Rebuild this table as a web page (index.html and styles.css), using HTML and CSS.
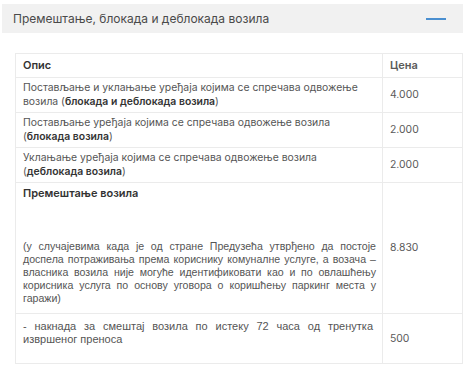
FILE: index.html
```html
<!DOCTYPE html>
<html lang="sr">
<head>
<meta charset="utf-8">
<title>Премештање, блокада и деблокада возила</title>
<link rel="stylesheet" href="styles.css">
</head>
<body>
<div class="wrap">
  <div class="acc-head">
    <span class="acc-title">Премештање, блокада и деблокада возила</span>
    <span class="acc-minus"></span>
  </div>
  <div class="acc-body">
    <table class="prices">
      <thead>
        <tr><th class="c-desc">Опис</th><th class="c-price">Цена</th></tr>
      </thead>
      <tbody>
        <tr>
          <td class="c-desc">Постављање и уклањање уређаја којима се спречава одвожење возила (<b>блокада и деблокада возила</b>)</td>
          <td class="c-price">4.000</td>
        </tr>
        <tr>
          <td class="c-desc">Постављање уређаја којима се спречава одвожење возила (<b>блокада возила</b>)</td>
          <td class="c-price">2.000</td>
        </tr>
        <tr>
          <td class="c-desc">Уклањање уређаја којима се спречава одвожење возила (<b>деблокада возила</b>)</td>
          <td class="c-price">2.000</td>
        </tr>
        <tr>
          <td class="c-desc">
            <p class="row-title">Премештање возила</p>
            <p class="arial">(у случајевима када је од стране Предузећа утврђено да постоје доспела потраживања према кориснику комуналне услуге, а возача – власника возила није могуће идентификовати као и по овлашћењу корисника услуга по основу уговора о коришћењу паркинг места у гаражи)</p>
          </td>
          <td class="c-price">8.830</td>
        </tr>
        <tr>
          <td class="c-desc last">
            <p class="arial">- накнада за смештај возила по истеку 72 часа од тренутка извршеног преноса</p>
          </td>
          <td class="c-price">500</td>
        </tr>
      </tbody>
    </table>
  </div>
</div>
</body>
</html>
```
FILE: styles.css
```css
html, body {
  margin: 0;
  padding: 0;
  background: #ffffff;
}
body {
  font-family: Inter, "Noto Sans", sans-serif;
  color: #555555;
}
.wrap {
  padding: 4px 5px 0 2px;
}
.acc-head {
  background: #f1f1f1;
  height: 29px;
  display: flex;
  align-items: center;
  justify-content: space-between;
  padding: 0 17px 0 11px;
}
.acc-title {
  font-size: 12px;
  color: #4a4a4a;
  line-height: 14px;
}
.acc-minus {
  width: 20px;
  height: 2px;
  background: #4a8fd0;
}
.acc-body {
  padding: 20px 0 0 13px;
}
.prices {
  width: 448px;
  border-collapse: collapse;
  font-size: 10.4px;
  line-height: 14px;
  color: #555555;
}
.prices th,
.prices td {
  border: 1px solid #ebebeb;
  text-align: left;
  vertical-align: middle;
}
.prices th {
  font-size: 11px;
  font-weight: 600;
  color: #333333;
  padding: 4px 7px 5px;
}
.prices td {
  padding: 3px 6px 3px 7px;
}
.prices .c-price {
  width: 80px;
  box-sizing: border-box;
  padding-left: 7px;
  color: #5a5a5a;
}
.prices b {
  font-weight: 600;
  color: #333333;
}
.row-title {
  margin: 0;
  font-size: 11px;
  font-weight: 600;
  color: #333333;
}
.arial {
  font-family: "Liberation Sans", Arial, sans-serif;
  font-size: 10.6px;
  line-height: 13px;
  text-align: justify;
  color: #555555;
  margin: 40px 0 5px;
}
.prices .last {
  padding: 6px 9px 17px 7px;
}
.last .arial {
  font-size: 11px;
  margin: 0;
}
```
